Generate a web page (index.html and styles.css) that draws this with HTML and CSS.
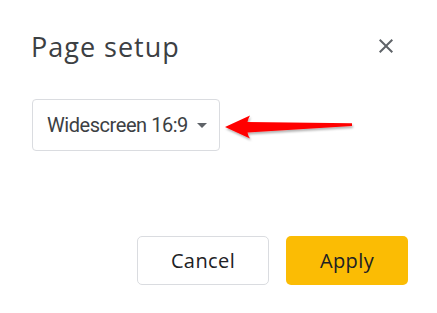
FILE: index.html
```html
<!DOCTYPE html>
<html>
<head>
<meta charset="utf-8">
<link rel="stylesheet" href="styles.css">
</head>
<body>
<div class="dialog">
  <div class="header">
    <h1 class="title">Page setup</h1>
    <button class="close" aria-label="Close">
      <svg width="24" height="24" viewBox="0 0 24 24"><path d="M19 6.41L17.59 5 12 10.59 6.41 5 5 6.41 10.59 12 5 17.59 6.41 19 12 13.41 17.59 19 19 17.59 13.41 12z" fill="#5f6368"/></svg>
    </button>
  </div>
  <div class="body">
    <div class="select">
      <span class="select-label">Widescreen 16:9</span>
      <span class="caret"></span>
    </div>
  </div>
  <div class="footer">
    <button class="btn btn-cancel">Cancel</button>
    <button class="btn btn-apply">Apply</button>
  </div>
  <svg class="annot-arrow" width="140" height="34" viewBox="0 0 140 34">
    <defs>
      <filter id="sh" x="-10%" y="-30%" width="130%" height="180%">
        <feDropShadow dx="1" dy="2" stdDeviation="1.2" flood-color="#000" flood-opacity="0.3"/>
      </filter>
    </defs>
    <path d="M5 17 L30 5.5 Q28 9 27.5 12 L132 13.3 L132 16 L27.5 22.5 Q28 25.5 30 28.5 Z" fill="#ff0000" filter="url(#sh)"/>
  </svg>
</div>
</body>
</html>
```
FILE: styles.css
```css
* { box-sizing: border-box; }
html, body { margin: 0; padding: 0; background: #fff; }
body { font-family: Roboto, "Noto Sans", sans-serif; width: 437px; height: 313px; overflow: hidden; }

.dialog {
  position: relative;
  padding: 31px 29px 0 31px;
}

.header {
  display: flex;
  justify-content: space-between;
  align-items: flex-start;
  padding-right: 10px;
}

.title {
  margin: 0;
  font-family: "Open Sans", Roboto, sans-serif;
  font-size: 27px;
  line-height: 32px;
  letter-spacing: 1px;
  font-weight: 400;
  color: #3c4043;
}

.close {
  margin-top: 3px;
  width: 24px;
  height: 24px;
  padding: 0;
  border: 0;
  background: none;
  display: flex;
}

.body {
  margin-top: 36px;
  padding-left: 1px;
}

.select {
  display: inline-flex;
  align-items: center;
  width: 188px;
  height: 52px;
  padding: 13px 12px 13px 14px;
  border: 1px solid #dadce0;
  border-radius: 4px;
}

.select-label {
  font-size: 20px;
  line-height: 24px;
  letter-spacing: -0.45px;
  color: #3c4043;
  flex: 1;
  white-space: nowrap;
}

.caret {
  width: 0;
  height: 0;
  border-left: 5px solid transparent;
  border-right: 5px solid transparent;
  border-top: 5px solid #5f6368;
}

.footer {
  display: flex;
  justify-content: flex-end;
  gap: 17px;
  margin-top: 85px;
}

.btn {
  height: 49px;
  border-radius: 5px;
  font-family: "Open Sans", Roboto, sans-serif;
  font-size: 20px;
  font-weight: 500;
  letter-spacing: 0.4px;
  padding: 0;
}

.btn-cancel {
  width: 132px;
  background: #fff;
  border: 1px solid #dadce0;
  color: #202124;
}

.btn-apply {
  width: 122px;
  background: #fbbc04;
  border: 0;
  color: #202124;
}

.annot-arrow {
  position: absolute;
  left: 220px;
  top: 110px;
}
```
